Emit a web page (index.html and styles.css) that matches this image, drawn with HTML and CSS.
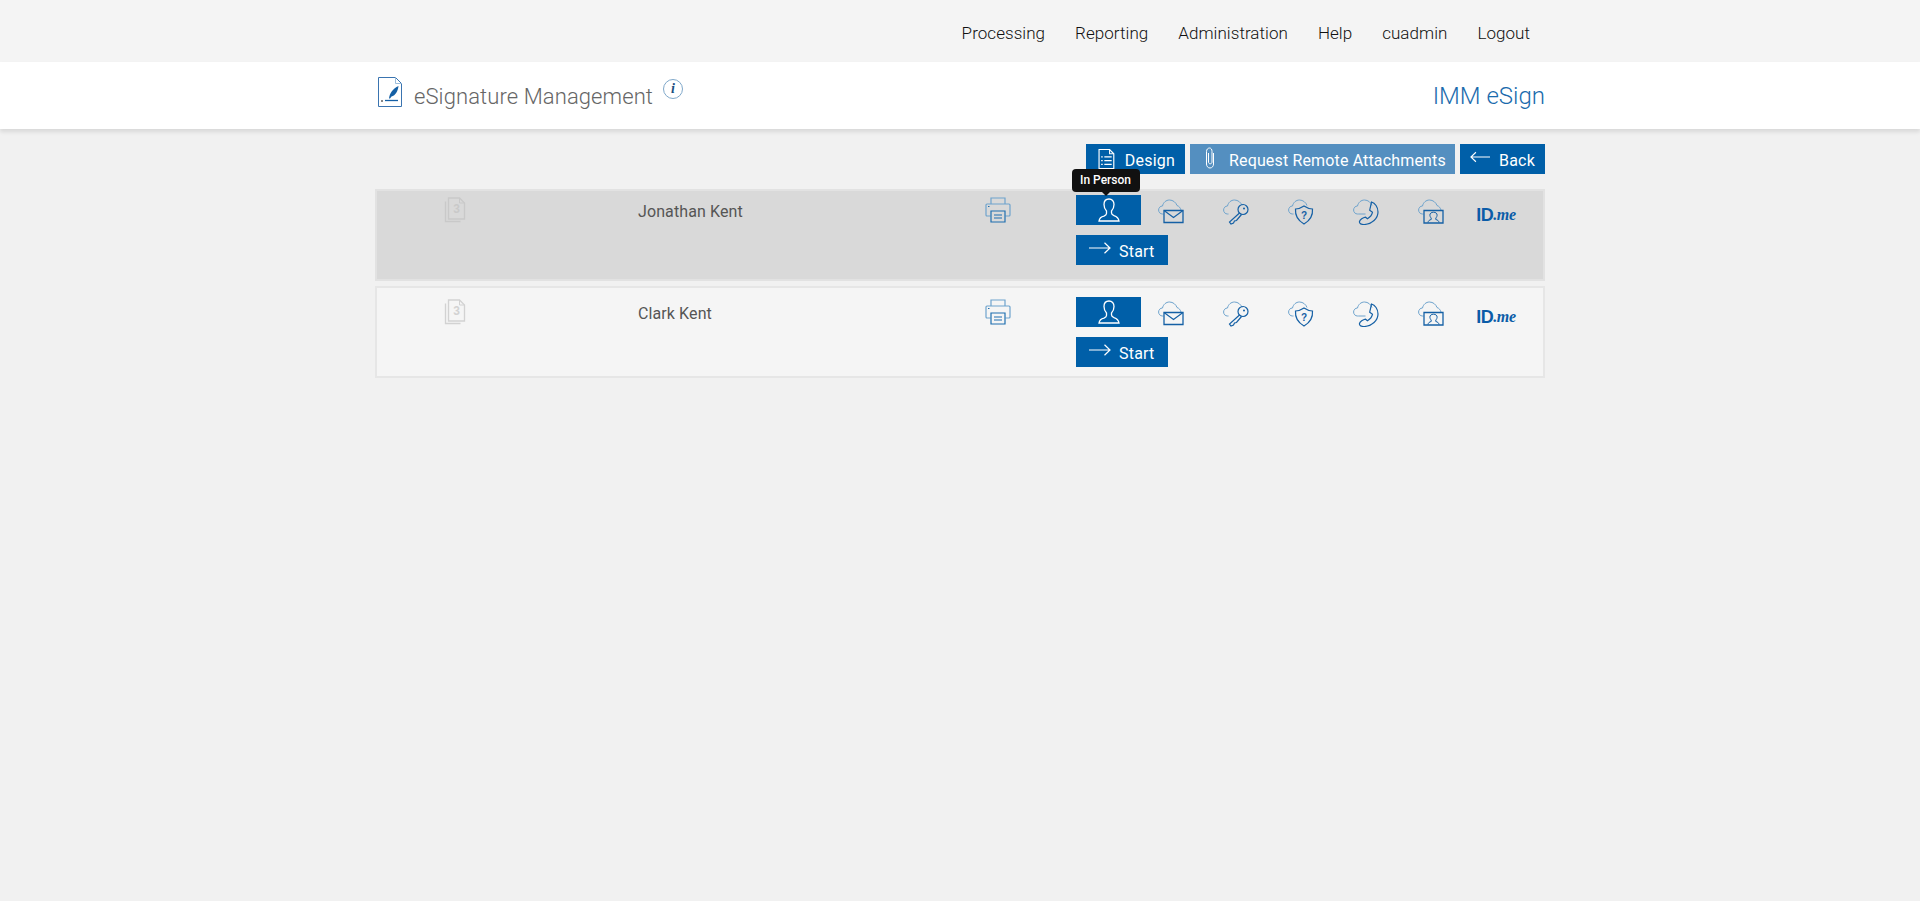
FILE: index.html
```html
<!DOCTYPE html>
<html lang="en">
<head>
  <meta charset="UTF-8" />
  <meta name="viewport" content="width=device-width, initial-scale=1.0"/>
  <title>eSignature Management</title>
  <link rel="stylesheet" href="styles.css">
</head>
<body>
  <svg class="icon-defs" width="0" height="0" aria-hidden="true">
    <symbol id="i-doc" viewBox="0 0 22 26">
      <path d="M1.500 4.500v20h15" fill="none" stroke="currentColor" stroke-width="1.300"/>
      <path d="M4.500 1h11l5 5v16h-16z" fill="none" stroke="currentColor" stroke-width="1.300"/>
      <path d="M15.500 1v5h5" fill="none" stroke="currentColor" stroke-width="1"/>
    </symbol>
    <symbol id="i-print" viewBox="0 0 26 26">
      <path d="M6 7V1h14v6" fill="none" stroke="#6ea3cd" stroke-width="1.200"/>
      <path d="M5.500 19H2a1 1 0 0 1-1-1V8a1 1 0 0 1 1-1h22a1 1 0 0 1 1 1v10a1 1 0 0 1-1 1h-3.500" fill="none" stroke="#6ea3cd" stroke-width="1.200"/>
      <path d="M6 14h14v11H6z" fill="none" stroke="#1f6fb0" stroke-width="1.200"/>
      <path d="M9 18h8M9 21h8" stroke="#1f6fb0" stroke-width="1.200"/>
      <path d="M3 9.500h1.500" stroke="#1f6fb0" stroke-width="1"/>
    </symbol>
    <symbol id="i-person" viewBox="0 0 22 24">
      <path d="M11 1c-3 0-5 2.200-5 5.500 0 2.600 1 5 2.500 6.500v2.500c0 1.300-1 2-2.500 2.600C3 18.700 1.500 19.700 1 23h20c-.5-3.300-2-4.300-5-5.400-1.500-.6-2.500-1.300-2.500-2.600V13C15 11.500 16 9.100 16 6.500 16 3.200 14 1 11 1z" fill="none" stroke="currentColor" stroke-width="1.300"/>
    </symbol>
    <symbol id="i-cloud" viewBox="0 0 26 26">
      <path d="M5.500 15h-1C2.300 15 .6 13.300 .6 11c0-2.200 1.700-4 3.900-4C5.200 3.600 8 1 11.500 1c3.500 0 6.500 2.500 7.500 5.500" fill="none" stroke="#6ea3cd" stroke-width="1"/>
    </symbol>
    <symbol id="i-mail" viewBox="0 0 26 26">
      <use href="#i-cloud"/>
      <path d="M19 6.500c2 .6 3.500 2.500 4 4.500" fill="none" stroke="#6ea3cd"/>
      <path d="M6 11.500h19v12H6z" fill="none" stroke="#1560a5" stroke-width="1.300"/>
      <path d="M6 11.500l9.500 7 9.500-7" fill="none" stroke="#1560a5" stroke-width="1.100"/>
    </symbol>
    <symbol id="i-key" viewBox="0 0 26 26">
      <use href="#i-cloud"/>
      <circle cx="20" cy="10.500" r="5" fill="none" stroke="#1560a5" stroke-width="1.200"/>
      <circle cx="21" cy="9.500" r="1" fill="#1560a5"/>
      <path d="M16.500 14 6.500 23 8 25l2.500-1 1-2 2-.5 5-6" fill="none" stroke="#1560a5" stroke-width="1.200"/>
    </symbol>
    <symbol id="i-shield" viewBox="0 0 26 26">
      <use href="#i-cloud"/>
      <path d="M7.500 10c3 0 5.500-1 8.500-3 3 2 5.500 3 8.500 3 .5 6-2.500 11.500-8.500 15C10 21.500 7 16 7.500 10z" fill="none" stroke="#1560a5" stroke-width="1.200"/>
    </symbol>
    <symbol id="i-phone" viewBox="0 0 26 26">
      <use href="#i-cloud"/>
      <path d="M5.500 15h7" fill="none" stroke="#6ea3cd" stroke-width="1"/>
      <path d="M18.500 3c3.500 1 6.500 5 6.500 10 0 6.500-6 12-13.500 12.500-3 .2-5.500-.8-5-3 .4-1.800 3.500-3.800 6-4.300l2 1.500c2.300-1.300 4.500-3.800 5-6.500l-2.800-2z" fill="none" stroke="#1560a5" stroke-width="1.200"/>
    </symbol>
    <symbol id="i-video" viewBox="0 0 26 26">
      <use href="#i-cloud"/>
      <path d="M19 6.500c2 .6 3.500 2.500 4 4.500" fill="none" stroke="#6ea3cd"/>
      <path d="M6 11.500h19v12.500H6z" fill="none" stroke="#1560a5" stroke-width="1.300"/>
      <path d="M10 23.500c.3-2 1.500-2.500 3.200-3v-1.500c-1-1-1.300-2-1.300-3 0-1.500 1.300-2.800 3.600-2.800s3.600 1.300 3.600 2.800c0 1-.3 2-1.300 3v1.500c1.700.5 2.900 1 3.200 3" fill="none" stroke="#1560a5" stroke-width="1"/>
    </symbol>
    <symbol id="i-arrow-right" viewBox="0 0 22 12">
      <path d="M0 6h21M15.500 .8 21 6l-5.500 5.200" fill="none" stroke="currentColor" stroke-width="1.200"/>
    </symbol>
    <symbol id="i-arrow-left" viewBox="0 0 22 12">
      <path d="M22 6H1M6.500 .8 1 6l5.500 5.200" fill="none" stroke="currentColor" stroke-width="1.200"/>
    </symbol>
  </svg>

  <div class="top-bar">
    <div class="container">
      <nav class="top-nav">
        <a href="#">Processing</a>
        <a href="#">Reporting</a>
        <a href="#">Administration</a>
        <a href="#">Help</a>
        <a href="#">cuadmin</a>
        <a href="#">Logout</a>
      </nav>
    </div>
  </div>

  <header class="title-bar">
    <div class="container title-inner">
      <div class="page-title">
        <svg class="title-icon" viewBox="0 0 24 30">
          <path d="M.5 .5h17l6 6v23H.5z" fill="none" stroke="#3a74b0" stroke-width="1"/>
          <path d="M17.500 .5v6h6" fill="none" stroke="#9dbedb" stroke-width="1"/>
          <path d="M11 21.500c.5-5 4-10 9.500-12.500-.5 5-3 9.500-7 10.500l-1.500 2z" fill="#1560a5"/>
          <path d="M7 23.500h13" stroke="#1560a5" stroke-width="1.300"/>
          <path d="M3 23l2 2M5 23l-2 2" stroke="#555" stroke-width=".7"/>
        </svg>
        <h1>eSignature Management</h1>
        <span class="info-badge">i</span>
      </div>
      <div class="app-name">IMM eSign</div>
    </div>
  </header>

  <main class="container">
    <div class="toolbar">
      <button class="btn btn-design">
        <svg class="btn-icon-doc" viewBox="0 0 16 20">
          <path d="M1 1h10l4 4v14H1z" fill="none" stroke="#fff" stroke-width="1.100"/>
          <path d="M11 1v4h4" fill="none" stroke="#fff" stroke-width="1"/>
          <path d="M6 8h7M6 11.500h7M6 15h7M3 8h1.500M3 11.500h1.500M3 15h1.500" stroke="#fff" stroke-width="1.200"/>
        </svg>
        <span>Design</span>
      </button>
      <button class="btn btn-light">
        <svg class="btn-icon-clip" viewBox="0 0 10 22">
          <path d="M8.500 6v11c0 2.300-1.500 4-3.500 4s-3.500-1.700-3.500-4V4.500C1.500 2.500 2.800 1 4.500 1S7 2.500 7 4.500V15c0 1-.7 1.800-1.800 1.800S3.500 16 3.500 15V6" fill="none" stroke="#fff" stroke-width="1"/>
        </svg>
        <span>Request Remote Attachments</span>
      </button>
      <button class="btn btn-back">
        <svg class="btn-arrow"><use href="#i-arrow-left"/></svg>
        <span>Back</span>
      </button>
    </div>

    <section class="signer signer-active">
      <div class="signer-doc">
        <svg class="doc-icon" viewBox="0 0 22 26"><use href="#i-doc"/><text x="12.500" y="16" class="doc-count">3</text></svg>
      </div>
      <div class="signer-name">Jonathan Kent</div>
      <div class="signer-print"><svg class="print-icon"><use href="#i-print"/></svg></div>
      <div class="signer-actions">
        <div class="methods">
          <span class="method-current">
            <svg class="person-icon"><use href="#i-person"/></svg>
            <span class="tooltip">In Person</span>
          </span>
          <span class="method"><svg class="method-icon"><use href="#i-mail"/></svg></span>
          <span class="method"><svg class="method-icon"><use href="#i-key"/></svg></span>
          <span class="method">
            <svg class="method-icon" viewBox="0 0 26 26"><use href="#i-shield"/><text x="16" y="19.500" class="shield-mark">?</text></svg>
          </span>
          <span class="method"><svg class="method-icon"><use href="#i-phone"/></svg></span>
          <span class="method"><svg class="method-icon"><use href="#i-video"/></svg></span>
          <span class="method idme"><b>ID</b><i>.me</i></span>
        </div>
        <button class="btn btn-start">
          <svg class="btn-arrow"><use href="#i-arrow-right"/></svg>
          <span>Start</span>
        </button>
      </div>
    </section>

    <section class="signer">
      <div class="signer-doc">
        <svg class="doc-icon" viewBox="0 0 22 26"><use href="#i-doc"/><text x="12.500" y="16" class="doc-count">3</text></svg>
      </div>
      <div class="signer-name">Clark Kent</div>
      <div class="signer-print"><svg class="print-icon"><use href="#i-print"/></svg></div>
      <div class="signer-actions">
        <div class="methods">
          <span class="method-current">
            <svg class="person-icon"><use href="#i-person"/></svg>
          </span>
          <span class="method"><svg class="method-icon"><use href="#i-mail"/></svg></span>
          <span class="method"><svg class="method-icon"><use href="#i-key"/></svg></span>
          <span class="method">
            <svg class="method-icon" viewBox="0 0 26 26"><use href="#i-shield"/><text x="16" y="19.500" class="shield-mark">?</text></svg>
          </span>
          <span class="method"><svg class="method-icon"><use href="#i-phone"/></svg></span>
          <span class="method"><svg class="method-icon"><use href="#i-video"/></svg></span>
          <span class="method idme"><b>ID</b><i>.me</i></span>
        </div>
        <button class="btn btn-start">
          <svg class="btn-arrow"><use href="#i-arrow-right"/></svg>
          <span>Start</span>
        </button>
      </div>
    </section>
  </main>
</body>
</html>
```

FILE: styles.css
```css
* { box-sizing: border-box; }

html, body { height: 100%; }

body {
  margin: 0;
  font-family: Roboto, "Liberation Sans", sans-serif;
  font-size: 16px;
  background-color: #f1f1f1;
  color: #555;
}

.icon-defs { position: absolute; }

.container {
  width: 1170px;
  margin: 0 auto;
}

.top-bar {
  height: 62px;
  background-color: #f4f4f4;
}

.top-nav {
  display: flex;
  justify-content: flex-end;
  gap: 30px;
  padding-right: 15px;
  line-height: 66px;
}

.top-nav a {
  font-size: 17px;
  font-weight: 300;
  letter-spacing: 0.05px;
  color: #111;
  text-decoration: none;
}

.title-bar {
  position: relative;
  height: 67px;
  background-color: #fff;
  box-shadow: 0 3px 4px rgba(0, 0, 0, 0.1);
}

.title-inner {
  display: flex;
  justify-content: space-between;
}

.page-title {
  display: flex;
  align-items: flex-start;
  padding-left: 3px;
}

.title-icon {
  width: 24px;
  height: 30px;
  margin-top: 15px;
}

.page-title h1 {
  margin: 0 0 0 12px;
  font-size: 22px;
  font-weight: 300;
  letter-spacing: 0.1px;
  line-height: 70px;
  color: #666;
}

.info-badge {
  display: block;
  width: 20px;
  height: 20px;
  margin: 17px 0 0 10px;
  border: 1px solid #7fa8ca;
  border-radius: 50%;
  font-family: "Liberation Serif", serif;
  font-size: 14px;
  font-style: italic;
  font-weight: bold;
  line-height: 18px;
  text-align: center;
  color: #1a4f80;
}

.app-name {
  font-size: 24px;
  font-weight: 300;
  line-height: 69px;
  color: #1a6bad;
}

.toolbar {
  display: flex;
  justify-content: flex-end;
  gap: 5px;
  padding-top: 15px;
  margin-bottom: 15px;
}

.btn {
  display: inline-flex;
  align-items: center;
  height: 30px;
  padding: 0 10px;
  border: none;
  background-color: #005fa8;
  font-family: inherit;
  font-size: 16px;
  letter-spacing: 0.2px;
  white-space: nowrap;
  color: #fff;
}

.btn span { padding-top: 2px; }

.btn-light {
  width: 265px;
  padding-right: 0;
  background-color: #548fc0;
  letter-spacing: 0.15px;
}

.btn-design { width: 99px; }

.btn-back { width: 85px; }

.btn-icon-doc {
  width: 18px;
  height: 22px;
  margin: 0 10px 0 2px;
}

.btn-icon-clip {
  width: 10px;
  height: 22px;
  margin: -2px 14px 0 5px;
}

.btn-arrow {
  width: 22px;
  height: 12px;
  margin-right: 9px;
  margin-top: -4px;
}

.signer {
  display: grid;
  grid-template-columns: 261px 347px 91px 1fr;
  height: 92px;
  margin-bottom: 5px;
  padding-top: 9px;
  border: 2px solid #e6e6e6;
  background-color: #f5f5f5;
}

.signer-active {
  padding-top: 4px;
  border-color: #e2e2e2;
  background-color: #d9d9d9;
}

.signer-doc {
  padding: 2px 0 0 67px;
  color: #d2d2d2;
}

.signer-active .signer-doc { color: #c9c9c9; }

.doc-icon {
  width: 22px;
  height: 26px;
}

.doc-count {
  font-family: "Liberation Sans", sans-serif;
  font-size: 12px;
  font-weight: bold;
  text-anchor: middle;
  fill: currentColor;
}

.signer-name {
  line-height: 34px;
  letter-spacing: 0.1px;
}

.signer-print { padding-top: 2px; }

.print-icon {
  width: 26px;
  height: 26px;
}

.methods {
  display: flex;
  align-items: flex-start;
  height: 40px;
}

.method-current {
  position: relative;
  display: flex;
  align-items: center;
  justify-content: center;
  width: 65px;
  height: 30px;
  background-color: #005fa8;
  color: #fff;
}

.person-icon {
  width: 22px;
  height: 24px;
}

.method {
  display: flex;
  justify-content: center;
  width: 60px;
  margin-right: 5px;
  padding-top: 4px;
}

.method-icon {
  width: 26px;
  height: 26px;
}

.shield-mark {
  font-family: "Liberation Sans", sans-serif;
  font-size: 10px;
  font-weight: bold;
  text-anchor: middle;
  fill: #1560a5;
}

.idme {
  padding-top: 10px;
  font-size: 18px;
  line-height: 20px;
  color: #0b5ca8;
}

.idme b {
  font-family: "Liberation Sans", sans-serif;
  letter-spacing: -0.5px;
}

.idme i {
  font-family: "Liberation Serif", serif;
  font-size: 16px;
  font-weight: bold;
  letter-spacing: -0.3px;
}

.tooltip {
  position: absolute;
  top: -26px;
  left: -4px;
  padding: 0 9px 0 8px;
  border-radius: 4px;
  background-color: #111;
  font-size: 12px;
  font-weight: 500;
  line-height: 23px;
  white-space: nowrap;
  color: #fff;
}

.tooltip::after {
  content: "";
  position: absolute;
  left: 30px;
  bottom: -4px;
  border-top: 4px solid #111;
  border-left: 4px solid transparent;
  border-right: 4px solid transparent;
}

.btn-start {
  width: 92px;
  padding: 0 13px;
}

.btn-start .btn-arrow { margin-right: 8px; }
```
